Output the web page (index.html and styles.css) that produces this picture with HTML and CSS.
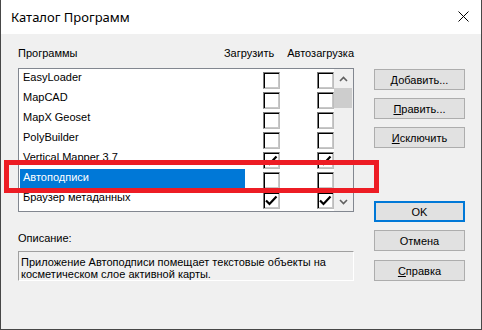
FILE: index.html
```html
<!DOCTYPE html>
<html lang="ru">
<head>
    <meta charset="UTF-8">
    <title>Каталог Программ</title>
    <link rel="stylesheet" href="styles.css">
</head>
<body>
    <div class="window">
        <div class="titlebar">
            <span class="title">Каталог Программ</span>
            <svg class="close" width="11" height="11" viewBox="0 0 11 11">
                <path d="M0.5 0.5 L10.5 10.5 M10.5 0.5 L0.5 10.5" stroke="#000" stroke-width="1"/>
            </svg>
        </div>
        <div class="content">
            <div class="left">
                <div class="heads">
                    <span class="h-name">Программы</span>
                    <span class="h-load">Загрузить</span>
                    <span>Автозагрузка</span>
                </div>
                <div class="list">
                    <div class="rows">
                        <div class="row"><span class="name">EasyLoader</span><span class="box"></span><span class="box box2"></span></div>
                        <div class="row"><span class="name">MapCAD</span><span class="box"></span><span class="box box2"></span></div>
                        <div class="row"><span class="name">MapX Geoset</span><span class="box"></span><span class="box box2"></span></div>
                        <div class="row"><span class="name">PolyBuilder</span><span class="box"></span><span class="box box2"></span></div>
                        <div class="row"><span class="name">Vertical Mapper 3.7</span>
                            <span class="box"><svg width="15" height="15" viewBox="0 0 15 15"><polyline points="2,7.5 5.5,11 12.5,3.5" fill="none" stroke="#000" stroke-width="2.2"/></svg></span>
                            <span class="box box2"><svg width="15" height="15" viewBox="0 0 15 15"><polyline points="2,7.5 5.5,11 12.5,3.5" fill="none" stroke="#000" stroke-width="2.2"/></svg></span>
                        </div>
                        <div class="row"><span class="name selected">Автоподписи</span><span class="box"></span><span class="box box2"></span></div>
                        <div class="row"><span class="name">Браузер метаданных</span>
                            <span class="box"><svg width="15" height="15" viewBox="0 0 15 15"><polyline points="2,7.5 5.5,11 12.5,3.5" fill="none" stroke="#000" stroke-width="2.2"/></svg></span>
                            <span class="box box2"><svg width="15" height="15" viewBox="0 0 15 15"><polyline points="2,7.5 5.5,11 12.5,3.5" fill="none" stroke="#000" stroke-width="2.2"/></svg></span>
                        </div>
                    </div>
                    <div class="scrollbar">
                        <span class="arrow"><svg width="9" height="6" viewBox="0 0 9 6"><polyline points="1,5 4.5,1.5 8,5" fill="none" stroke="#606060" stroke-width="1.6"/></svg></span>
                        <span class="thumb"></span>
                        <span class="track"></span>
                        <span class="arrow"><svg width="9" height="6" viewBox="0 0 9 6"><polyline points="1,1 4.5,4.5 8,1" fill="none" stroke="#606060" stroke-width="1.6"/></svg></span>
                    </div>
                </div>
                <div class="desc-label">Описание:</div>
                <div class="desc">Приложение Автоподписи помещает текстовые объекты на косметическом слое активной карты.</div>
            </div>
            <div class="right">
                <div class="group">
                    <button class="btn"><u>Д</u>обавить...</button>
                    <button class="btn"><u>П</u>равить...</button>
                    <button class="btn"><u>И</u>сключить</button>
                </div>
                <div class="group">
                    <button class="btn default">OK</button>
                    <button class="btn">Отмена</button>
                    <button class="btn"><u>С</u>правка</button>
                </div>
            </div>
        </div>
        <div class="highlight"></div>
    </div>
</body>
</html>
```

FILE: styles.css
```css
body {
    margin: 0;
    padding: 0;
    font-family: "Liberation Sans", Arial, sans-serif;
    font-size: 11px;
    color: #000;
}
.window {
    position: relative;
    width: 482px;
    height: 330px;
    box-sizing: border-box;
    border: 1px solid #474747;
    border-top: none;
    background: #f0f0f0;
}
.titlebar {
    height: 34px;
    background: #fff;
    display: flex;
    align-items: center;
    justify-content: space-between;
    padding: 0 12px 0 10px;
}
.title {
    font-family: "Noto Sans", "Open Sans", sans-serif;
    font-size: 13px;
    margin-top: -1px;
}
.close {
    margin-top: -2px;
}
.content {
    display: grid;
    grid-template-columns: 336px 91px;
    column-gap: 20px;
    padding: 13px 16px 5px 17px;
}
.left {
    display: flex;
    flex-direction: column;
}
.heads {
    display: flex;
    height: 13px;
    line-height: 13px;
    margin-bottom: 8px;
}
.h-name {
    width: 218px;
}
.h-load {
    width: 67px;
}
.list {
    display: flex;
    height: 144px;
    box-sizing: border-box;
    border: 1px solid #828790;
    background: #fff;
}
.rows {
    flex: 1;
    overflow: hidden;
}
.row {
    display: flex;
    height: 20px;
    white-space: nowrap;
}
.name {
    width: 222px;
    margin-left: 1px;
    padding-left: 3px;
    line-height: 17px;
    height: 20px;
}
.name.selected {
    background: #0078d7;
    color: #fff;
}
.box {
    flex: none;
    width: 17px;
    height: 17px;
    box-sizing: border-box;
    margin: 3px 0 0 18px;
    border: 1px solid;
    border-color: #7a7a7a #bdbdbd #bdbdbd #7a7a7a;
    box-shadow: inset 1px 1px #000, inset -1px -1px #c8c8c8;
    background: #fff;
}
.box svg {
    display: block;
}
.box2 {
    margin-left: 37px;
}
.scrollbar {
    width: 19px;
    background: #f0f0f0;
    display: flex;
    flex-direction: column;
}
.arrow {
    height: 19px;
    display: flex;
    align-items: center;
    justify-content: center;
}
.thumb {
    height: 20px;
    margin-right: 1px;
    background: #cdcdcd;
}
.track {
    flex: 1;
}
.desc-label {
    margin-top: 20px;
    line-height: 13px;
}
.desc {
    margin-top: 6px;
    flex: 1;
    box-sizing: border-box;
    border: 1px solid;
    border-color: #a0a0a0 #fff #fff #a0a0a0;
    padding: 4px 3px 0 2px;
    line-height: 12px;
}
.right {
    display: flex;
    flex-direction: column;
    justify-content: space-between;
    padding-top: 22px;
}
.group {
    display: flex;
    flex-direction: column;
    gap: 8px;
}
.btn {
    height: 21px;
    width: 91px;
    padding: 0;
    font-family: "Liberation Sans", Arial, sans-serif;
    font-size: 11px;
    color: #000;
    background: #e1e1e1;
    border: 1px solid #adadad;
}
.btn.default {
    border: 2px solid #0078d7;
}
.group .btn:last-child {
    margin-top: 1px;
}
.group:first-child .btn:last-child {
    margin-top: 0;
}
.highlight {
    position: absolute;
    left: 3px;
    top: 160px;
    width: 375px;
    height: 33px;
    box-sizing: border-box;
    border: 5px solid #ed1c24;
}
```
